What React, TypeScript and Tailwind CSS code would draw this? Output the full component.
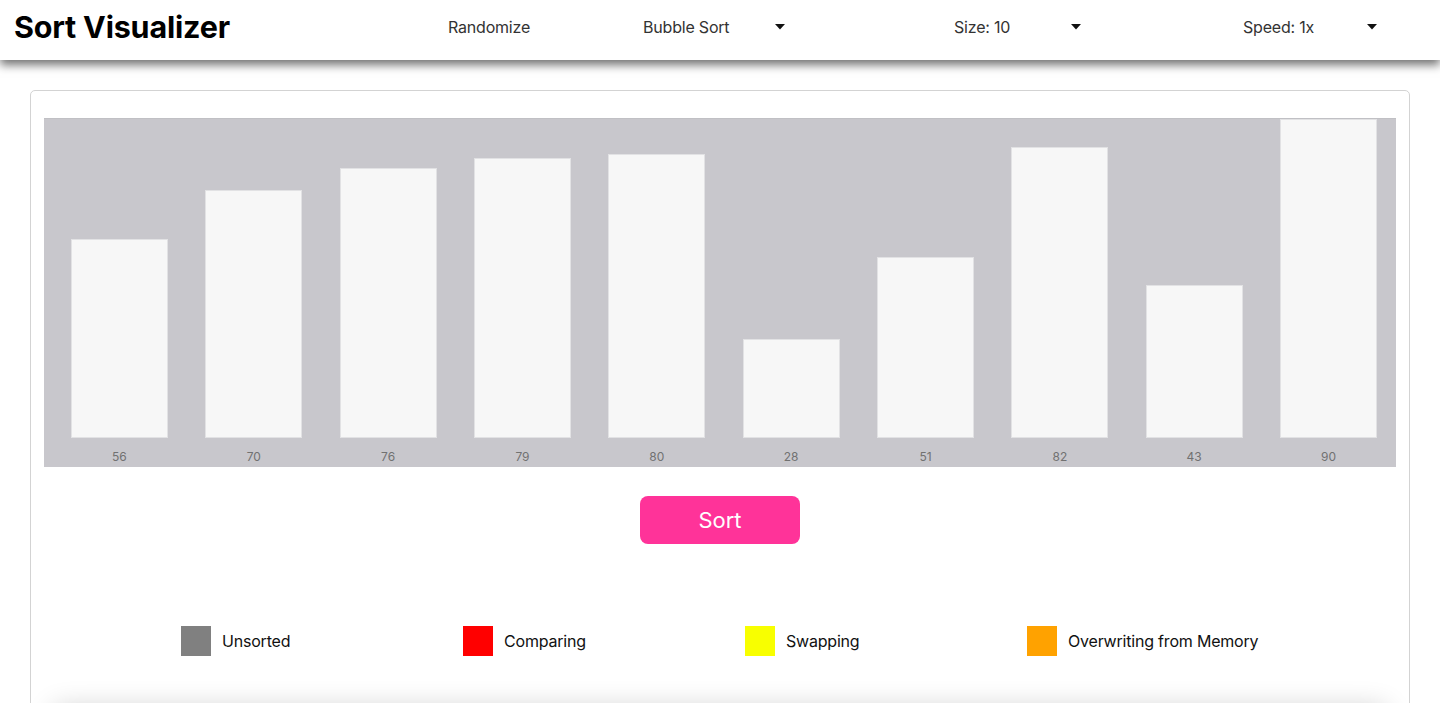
import React from "react";

const values = [56, 70, 76, 79, 80, 28, 51, 82, 43, 90];

function Caret() {
  return (
    <svg width="10" height="6" viewBox="0 0 10 6" className="shrink-0">
      <path d="M0 0 L10 0 L5 5.5 Z" fill="#111" />
    </svg>
  );
}

const legend = [
  { color: "bg-[#808080]", label: "Unsorted" },
  { color: "bg-[#ff0000]", label: "Comparing" },
  { color: "bg-[#f8ff00]", label: "Swapping" },
  { color: "bg-[#ffa200]", label: "Overwriting from Memory" },
];

export default function App() {
  return (
    <div className="min-h-[703px] bg-white font-['Inter','Helvetica_Neue',Arial,sans-serif] overflow-hidden">
      <header className="relative z-10 h-[60px] bg-white flex items-center pb-[6px] shadow-[0_5px_9px_rgba(0,0,0,0.55)]">
        <h1 className="ml-[14px] w-[434px] text-[30.5px] font-bold text-black tracking-[-0.2px]">Sort Visualizer</h1>
        <div className="flex items-center text-[16px] text-[#333] tracking-[-0.2px]">
          <button className="w-[195px] text-left">Randomize</button>
          <div className="w-[311px] flex items-center">
            <div className="w-[142px] flex items-center justify-between">
              <span>Bubble Sort</span>
              <Caret />
            </div>
          </div>
          <div className="w-[289px] flex items-center">
            <div className="w-[127px] flex items-center justify-between">
              <span>Size: 10</span>
              <Caret />
            </div>
          </div>
          <div className="w-[134px] flex items-center justify-between">
            <span>Speed: 1x</span>
            <Caret />
          </div>
        </div>
      </header>

      <main className="px-[30px] pt-[30px]">
        <div className="border border-[#d3d3d3] rounded-[5px] px-[13px] pt-[27px]">
          <div className="h-[349px] bg-[#c8c7cc] border-t border-[#c0c0c4] flex pl-[27px] pr-[19px] gap-[37.5px]">
            {values.map((v, i) => (
              <div key={i} className="flex-1 flex flex-col justify-end">
                <div
                  className="bg-[#f7f7f7] border border-[#e2e2e4]"
                  style={{ height: `${v * 3.55}px` }}
                />
                <div className="h-[29px] flex items-center justify-center text-[12px] text-[#717171] pt-[9px]">
                  {v}
                </div>
              </div>
            ))}
          </div>

          <div className="flex justify-center mt-[29px]">
            <button className="w-[160px] h-[48px] rounded-[8px] bg-[#ff3399] text-white text-[22px]">Sort</button>
          </div>

          <div className="flex mt-[82px] pl-[137px]">
            {legend.map((l) => (
              <div key={l.label} className="w-[282px] flex items-center gap-[11px]">
                <div className={`w-[30px] h-[30px] ${l.color}`} />
                <span className="text-[16px] text-[#111] tracking-[-0.2px]">{l.label}</span>
              </div>
            ))}
          </div>

          <div className="mt-[52px] mx-[10px] h-[60px] bg-white shadow-[0_0_28px_rgba(0,0,0,0.2)]" />
        </div>
      </main>
    </div>
  );
}
